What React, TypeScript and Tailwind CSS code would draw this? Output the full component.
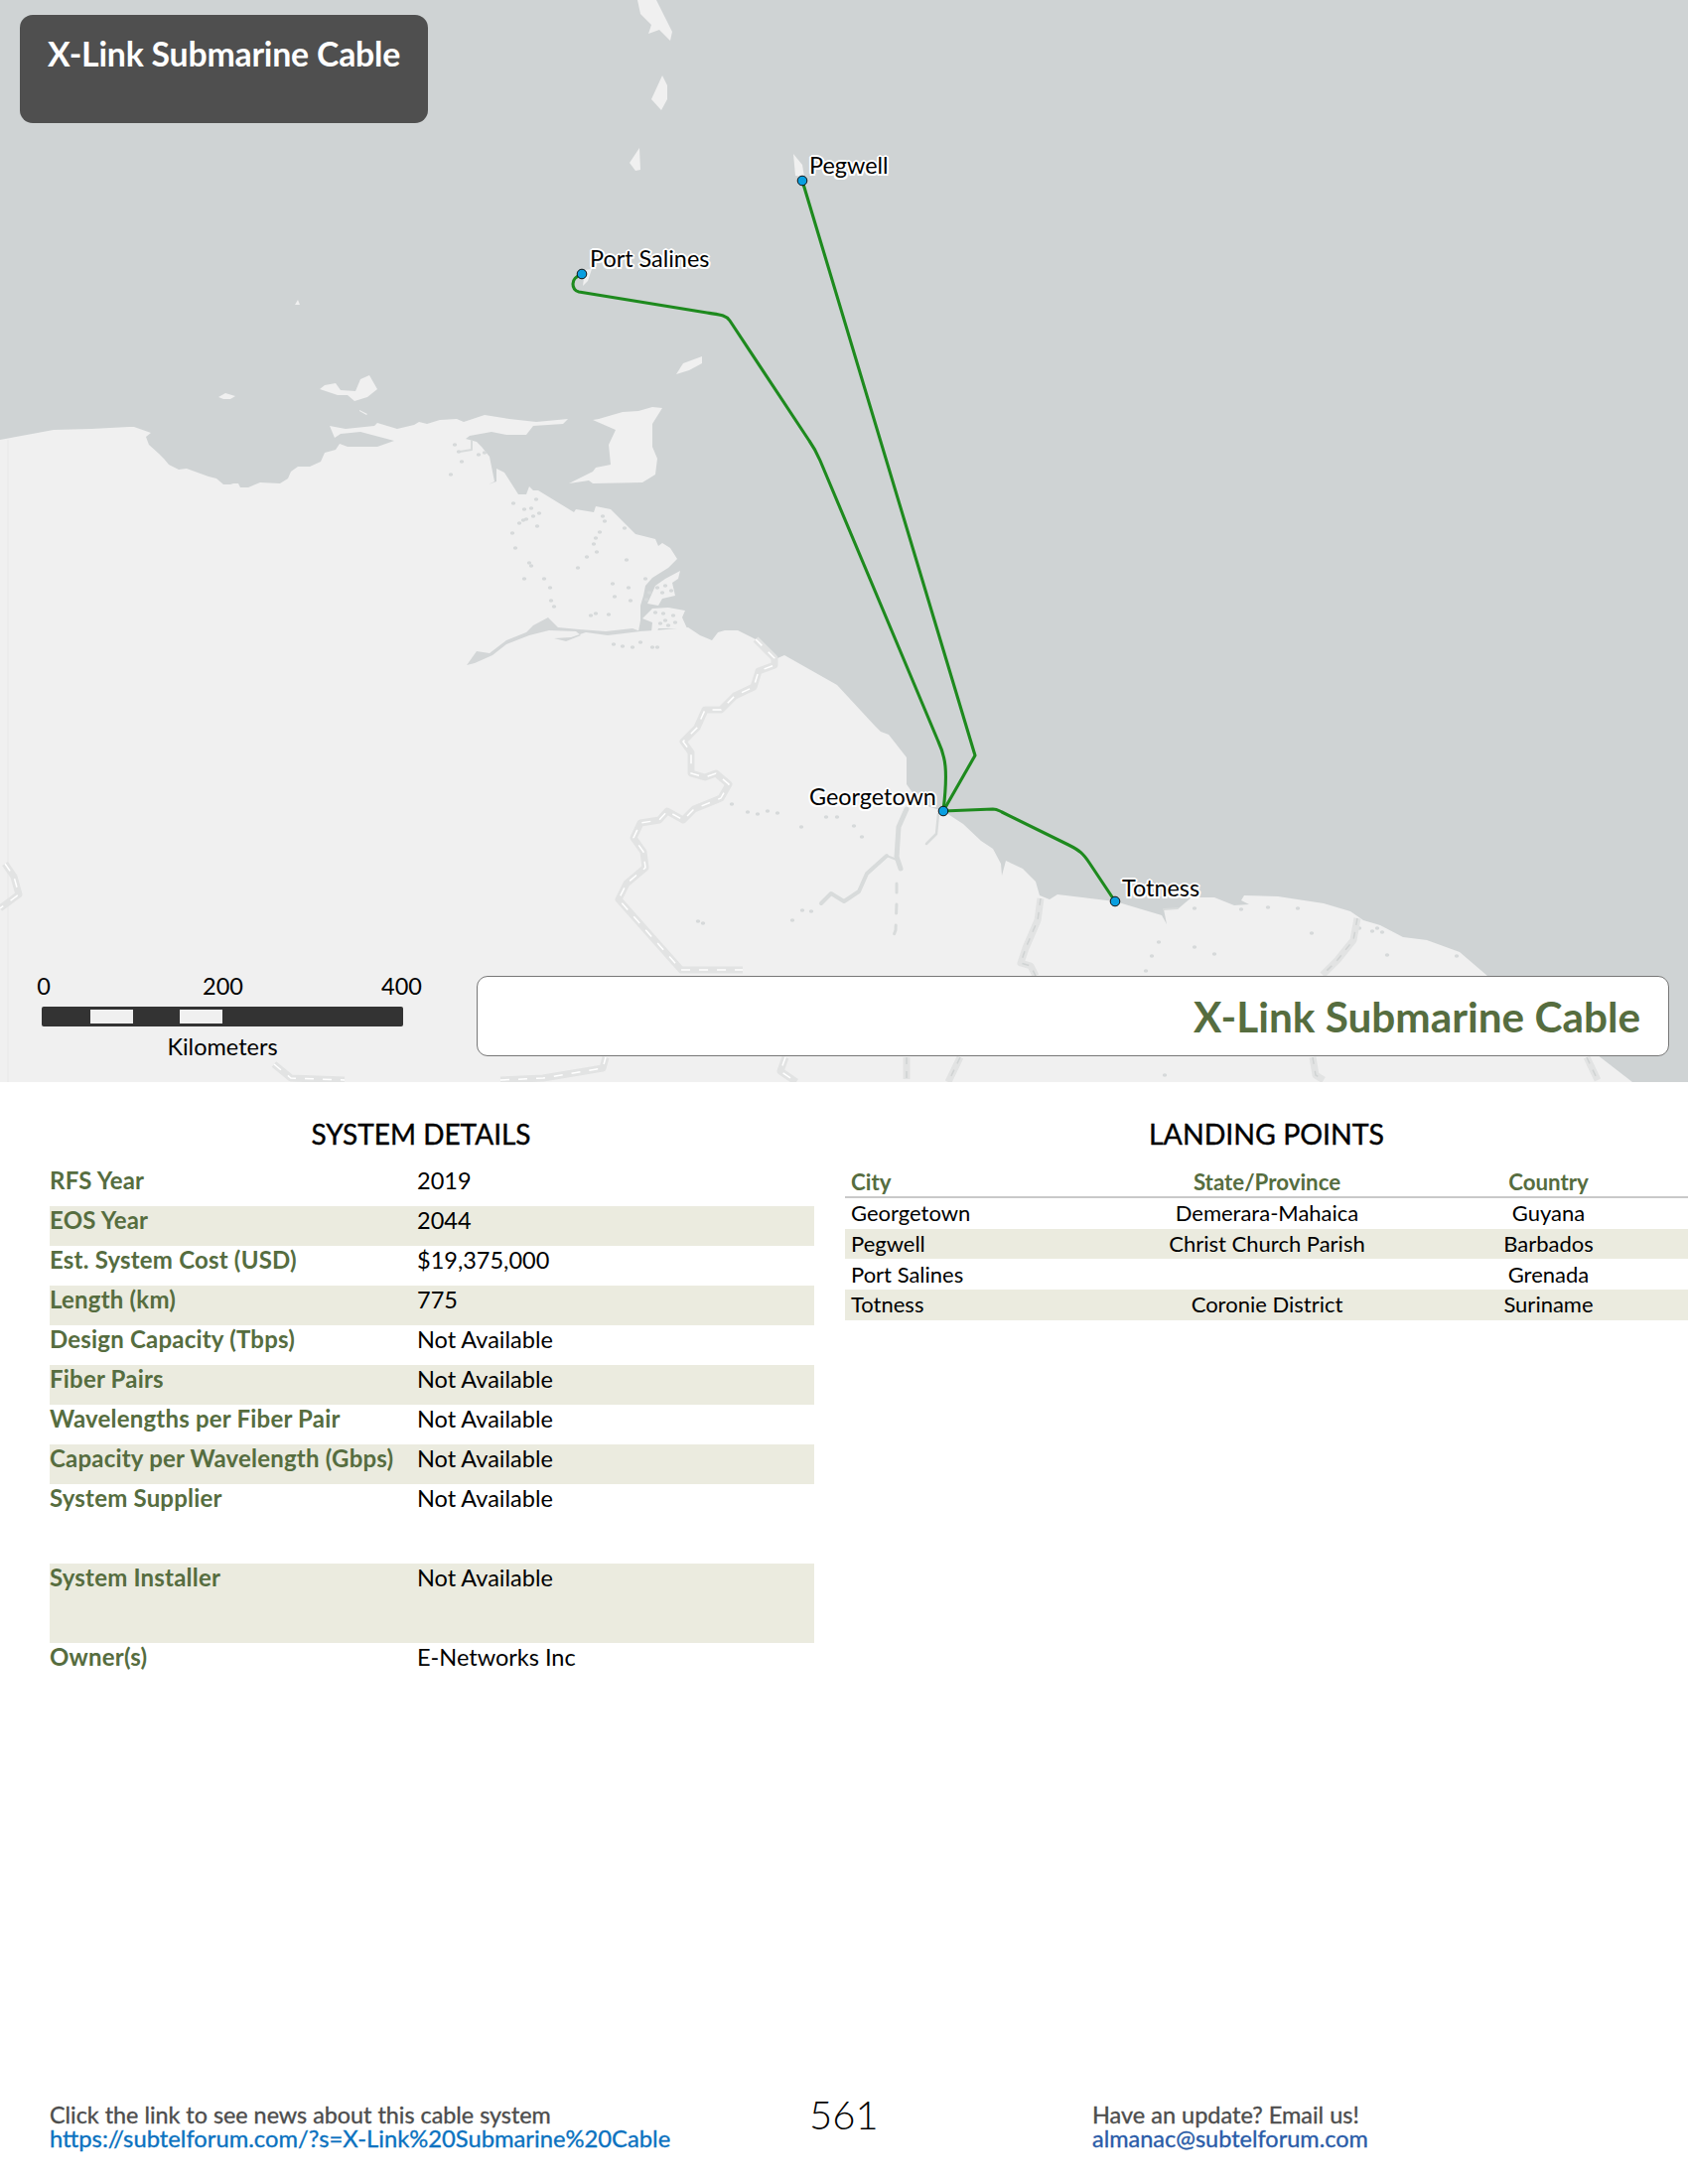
import React from 'react'

const land =
  '0,443 54,433 92,432 130,430 135,430 152,436 147,440 150,448 160,457 165,462 170,468 180,473 188,472 210,480 218,482 225,488 232,488 235,487 240,487 242,491 250,491 262,486 282,487 290,482 293,475 300,470 312,470 323,465 327,456 338,453 342,447 350,450 380,450 397,444 363,435 343,437 337,441 332,429 348,432 377,429 380,426 400,432 417,428 422,425 430,427 443,423 460,422 467,425 488,418 513,422 540,425 572,422 567,427 537,429 530,438 510,438 495,435 473,439 469,442 480,445 485,450 493,460 498,485 492,488 500,485 500,472 508,476 522,498 530,498 533,490 537,494 542,494 578,516 580,513 598,516 600,510 615,513 640,538 660,543 663,550 667,547 675,552 682,563 673,572 657,582 650,590 648,600 645,610 645,625 643,636 660,635 693,632 705,640 717,645 723,637 730,635 743,635 763,645 783,663 790,660 843,690 880,730 887,737 895,740 913,763 913,790 927,810 950,817 970,830 988,847 1000,855 1008,870 1009,882 1013,867 1030,875 1043,888 1047,902 1057,906 1065,901 1123,908 1170,922 1175,931 1172,916 1187,915 1200,904 1223,904 1243,912 1258,911 1250,907 1253,902 1287,903 1333,910 1360,918 1373,927 1390,932 1413,944 1437,947 1470,959 1498,983 1560,1025 1644,1090 0,1090'

const islands = [
  '597,423 603,422 627,415 643,414 657,410 667,411 657,427 657,450 662,462 660,478 647,486 597,487 593,484 573,487 597,475 600,471 615,468 613,448 620,433',
  '681,377 688,366 707,359 707,366 694,373',
  '656,100 667,76 672,86 672,100 666,111',
  '634,164 644,149 645,171 640,172',
  '642,0 661,0 677,32 675,41 664,30 653,34 656,25 645,14',
  '799,155 808,166 810,178 801,177',
  '596,271 592,283 587,288 589,272',
  '322,392 327,388 338,386 343,393 358,394 363,382 372,378 380,392 370,400 357,404 350,398 340,398',
  '220,400 227,396 237,399 232,402 225,402',
  '297,307 300,302 302,307',
  '362,413 370,417 369,418 362,414',
  // Orinoco delta
  '660,590 670,583 685,575 683,583 677,587 680,600 667,603 663,610 652,608 657,597',
  '647,623 657,613 673,612 690,615 687,622 692,633 663,633 660,643 655,647 657,627',
]

const orinoco =
  '470,670 480,656 493,658 510,645 530,637 537,630 552,622 562,632 583,634 610,636 637,633 645,636 612,640 590,637 575,642 558,643 570,646 585,640 580,636 553,635 533,640 510,649 496,660 478,668'

const rivers: [string, number, string?][] = [
  ['463,455 475,453 475,444', 2],
  ['913,815 905,833 903,863 907,875', 5],
  ['893,862 873,880 865,898 850,908 837,900 827,910', 4],
  ['945,820 943,840 933,850', 2.5],
  ['893,862 903,866', 2],
  ['903,890 903,910 902,937 897,950', 3, '9 12'],
  ['1172,916 1186,915', 2],
]

const borders = [
  '761,644 780,663 780,670 764,676 759,692 740,701 726,715 710,715 702,733 688,747 696,758 696,779 710,783 721,779 734,790 726,804 699,815 688,826 672,817 664,826 645,829 638,844 648,858 650,874 631,890 623,906 686,977 748,977',
  '5,870 14,883 19,901 0,915',
  '276,1072 293,1086 347,1088',
  '504,1088 547,1086 607,1076 610,1065',
  '791,1065 786,1079 802,1090',
]

const greyBorders = [
  '1048,905 1045,927 1033,955 1028,970 1038,973 1043,983',
  '1367,925 1363,947 1347,967 1332,982',
  '913,1065 913,1087',
  '967,1065 955,1090',
  '1322,1065 1325,1083 1333,1088',
  '1598,1065 1609,1088',
]

const islets: [number, number][] = [
  [458, 448], [462, 455], [465, 465], [454, 478], [482, 458], [488, 456], [517, 507], [528, 513], [530, 523],
  [523, 527], [527, 524], [537, 520], [543, 517], [541, 530], [516, 537], [519, 552], [533, 567], [535, 570],
  [528, 583], [548, 583], [554, 592], [555, 605], [558, 611], [540, 503], [535, 512], [607, 520], [609, 525],
  [629, 532], [604, 536], [600, 542], [598, 548], [601, 556], [591, 561], [582, 572], [631, 564], [617, 588],
  [633, 592], [619, 601], [635, 605], [595, 620], [600, 618], [613, 619], [650, 583], [654, 597], [651, 604],
  [618, 649], [627, 651], [637, 652], [645, 647], [657, 652], [662, 652], [662, 592], [670, 590], [676, 595],
  [667, 597], [660, 617], [668, 618], [678, 620], [670, 625], [665, 628], [680, 627], [673, 630],
  [737, 810], [753, 818], [763, 820], [773, 817], [783, 819], [807, 833], [832, 823], [843, 823], [860, 832],
  [868, 843], [817, 918], [808, 917], [798, 927], [703, 928], [708, 930], [1203, 915], [1277, 914], [1307, 915],
  [1321, 940], [1203, 954], [1223, 961], [1369, 935], [1382, 938], [1387, 935], [1392, 939], [1397, 962],
  [1467, 963], [1167, 949], [1160, 963], [1154, 978], [1173, 1083], [1250, 916],
]

const cables = [
  'M586 276 C580 279 577 281 577 286 C577 291 579 293 583 294 L712 315 C724 317 731 317 735 323 L815 444 C820 451 823 457 826 464 L945 747 C952 762 955 775 950 817',
  'M808 182 L982 761 L950 817',
  'M950 817 L1000 815 C1004 815 1005 816 1009 818 L1076 851 C1088 857 1091 860 1097 869 L1123 908',
]

const dots: [number, number][] = [[586, 276], [808, 182], [950, 817], [1123, 908]]

const mapLabels = [
  { name: 'Pegwell', cls: 'left-[815px] top-[153px]' },
  { name: 'Port Salines', cls: 'left-[594px] top-[247px]' },
  { name: 'Georgetown', cls: 'left-[815px] top-[789px]' },
  { name: 'Totness', cls: 'left-[1130px] top-[881px]' },
]

const details = [
  { label: 'RFS Year', value: '2019' },
  { label: 'EOS Year', value: '2044' },
  { label: 'Est. System Cost (USD)', value: '$19,375,000' },
  { label: 'Length (km)', value: '775' },
  { label: 'Design Capacity (Tbps)', value: 'Not Available' },
  { label: 'Fiber Pairs', value: 'Not Available' },
  { label: 'Wavelengths per Fiber Pair', value: 'Not Available' },
  { label: 'Capacity per Wavelength (Gbps)', value: 'Not Available' },
  { label: 'System Supplier', value: 'Not Available', tall: true },
  { label: 'System Installer', value: 'Not Available', tall: true },
  { label: 'Owner(s)', value: 'E-Networks Inc' },
]

const landings = [
  { city: 'Georgetown', state: 'Demerara-Mahaica', country: 'Guyana' },
  { city: 'Pegwell', state: 'Christ Church Parish', country: 'Barbados' },
  { city: 'Port Salines', state: '', country: 'Grenada' },
  { city: 'Totness', state: 'Coronie District', country: 'Suriname' },
]

const MapDrawing = () => (
  <svg viewBox="0 0 1700 1090" className="block w-[1700px] h-[1090px]">
    <rect width="1700" height="1090" fill="#cfd3d4" />
    <polygon points={land} fill="#f0f0f0" />
    {islands.map((p) => (
      <polygon key={p} points={p} fill="#f0f0f0" />
    ))}
    <line x1="8" y1="443" x2="8" y2="1090" stroke="#e8e8e8" strokeWidth="1" />
    <polygon points={orinoco} fill="#d3d6d7" />
    {rivers.map(([p, w, dash]) => (
      <polyline key={p} points={p} fill="none" stroke="#d8dbdb" strokeWidth={w} strokeDasharray={dash} strokeLinejoin="round" strokeLinecap="round" />
    ))}
    {islets.map(([x, y]) => (
      <ellipse key={`${x}-${y}`} cx={x} cy={y} rx="2.2" ry="1.7" fill="#d6d9da" />
    ))}
    {borders.map((p) => (
      <g key={p}>
        <polyline points={p} fill="none" stroke="#e2e3e3" strokeWidth="7" strokeLinejoin="round" />
        <polyline points={p} fill="none" stroke="#ffffff" strokeWidth="1.5" strokeDasharray="9 9" />
      </g>
    ))}
    {greyBorders.map((p) => (
      <g key={p}>
        <polyline points={p} fill="none" stroke="#e2e3e3" strokeWidth="7" strokeLinejoin="round" />
        <polyline points={p} fill="none" stroke="#d0d3d3" strokeWidth="1.5" strokeDasharray="7 7" />
      </g>
    ))}
    {cables.map((d) => (
      <path key={d} d={d} fill="none" stroke="#1e8a1e" strokeWidth="3.1" strokeLinejoin="round" />
    ))}
    {dots.map(([x, y]) => (
      <circle key={x} cx={x} cy={y} r="4.8" fill="#0a9fe0" stroke="#111111" strokeWidth="1" />
    ))}
  </svg>
)

const App: React.FC = () => {
  return (
    <div className="flex flex-col w-[1700px] h-[2200px] bg-white font-['Lato','Liberation_Sans',sans-serif] text-black">
      <div className="relative h-[1090px] overflow-hidden">
        <MapDrawing />

        <div className="absolute left-[20px] top-[15px] w-[411px] h-[109px] rounded-[13px] bg-[#4f4f4f] pl-[28px] pt-[16px]">
          <h1 className="text-[33.8px] leading-[46px] font-bold text-white tracking-[-0.2px]">X-Link Submarine Cable</h1>
        </div>

        {mapLabels.map(({ name, cls }) => (
          <span
            key={name}
            className={`absolute ${cls} text-[23.4px] leading-[26px] text-black [text-shadow:-1.5px_-1.5px_0_#fff,1.5px_-1.5px_0_#fff,-1.5px_1.5px_0_#fff,1.5px_1.5px_0_#fff,0_2px_0_#fff,0_-2px_0_#fff,2px_0_0_#fff,-2px_0_0_#fff]`}
          >
            {name}
          </span>
        ))}

        <div className="absolute left-[24px] top-[980px] flex flex-col items-center w-[400px] text-[23.5px] leading-[26px]">
          <div className="flex justify-between w-full">
            <span className="w-10 text-center">0</span>
            <span className="w-10 text-center">200</span>
            <span className="w-10 text-center">400</span>
          </div>
          <div className="flex items-center gap-[47px] w-[364px] h-[20px] mt-[8px] pl-[49px] bg-[#333333] rounded-[2px]">
            <div className="w-[43px] h-[14px] bg-[#f0f0f0]" />
            <div className="w-[43px] h-[14px] bg-[#f0f0f0]" />
          </div>
          <span className="mt-[7px]">Kilometers</span>
        </div>

        <div className="absolute left-[480px] top-[983px] flex items-center justify-end w-[1201px] h-[81px] pr-[28px] bg-white border-[1.5px] border-[#777777] rounded-[11px]">
          <h2 className="text-[42.3px] leading-[50px] font-bold text-[#566d3f]">X-Link Submarine Cable</h2>
        </div>
      </div>

      <div className="flex items-start pt-[34px]">
        <section className="w-[770px] ml-[50px]">
          <h3 className="pr-[22px] text-[28px] leading-[36px] text-center [-webkit-text-stroke:0.4px_currentColor]">SYSTEM DETAILS</h3>
          <div className="mt-[15px]">
            {details.map((d, i) => (
              <div
                key={d.label}
                className={`flex leading-[28px] ${d.tall ? 'h-[80px]' : 'h-[40px]'} ${i % 2 === 1 ? 'bg-[#ebebdf]' : ''}`}
              >
                <div className="w-[370px] text-[24px] tracking-[0.2px] font-bold text-[#566d3f] whitespace-nowrap">{d.label}</div>
                <div className="text-[23.5px]">{d.value}</div>
              </div>
            ))}
          </div>
        </section>

        <section className="w-[849px] ml-[31px]">
          <h3 className="text-[28.5px] leading-[36px] text-center [-webkit-text-stroke:0.4px_currentColor]">LANDING POINTS</h3>
          <div className="flex text-[22.3px] leading-[28px] font-bold text-[#566d3f] mt-[17px] h-[30px] border-b-[2px] border-[#c9c9c9]">
            <div className="w-[280px] pl-[6px]">City</div>
            <div className="w-[290px] text-center">State/Province</div>
            <div className="w-[277px] text-center">Country</div>
          </div>
          {landings.map((l, i) => (
            <div
              key={l.city}
              className={`flex items-center text-[22px] leading-[28px] h-[30.7px] ${i % 2 === 1 ? 'bg-[#ebebdf]' : ''}`}
            >
              <div className="w-[280px] pl-[6px]">{l.city}</div>
              <div className="w-[290px] text-center">{l.state}</div>
              <div className="w-[277px] text-center">{l.country}</div>
            </div>
          ))}
        </section>
      </div>

      <footer className="flex items-center mt-auto mb-[34px] pl-[50px] text-[23.5px] leading-[24px] text-[#4d4d4d] [-webkit-text-stroke:0.35px_currentColor]">
        <div className="w-[765px]">
          <p className="text-[23.35px]">Click the link to see news about this cable system</p>
          <p className="text-[23.75px] text-[#0b72c0]">https://subtelforum.com/?s=X-Link%20Submarine%20Cable</p>
        </div>
        <div className="w-[285px] -mt-[25px] text-[40px] leading-[48px] font-light text-black [-webkit-text-stroke:0]">561</div>
        <div>
          <p>Have an update? Email us!</p>
          <p className="text-[#2a5ca8]">almanac@subtelforum.com</p>
        </div>
      </footer>
    </div>
  )
}

export default App
